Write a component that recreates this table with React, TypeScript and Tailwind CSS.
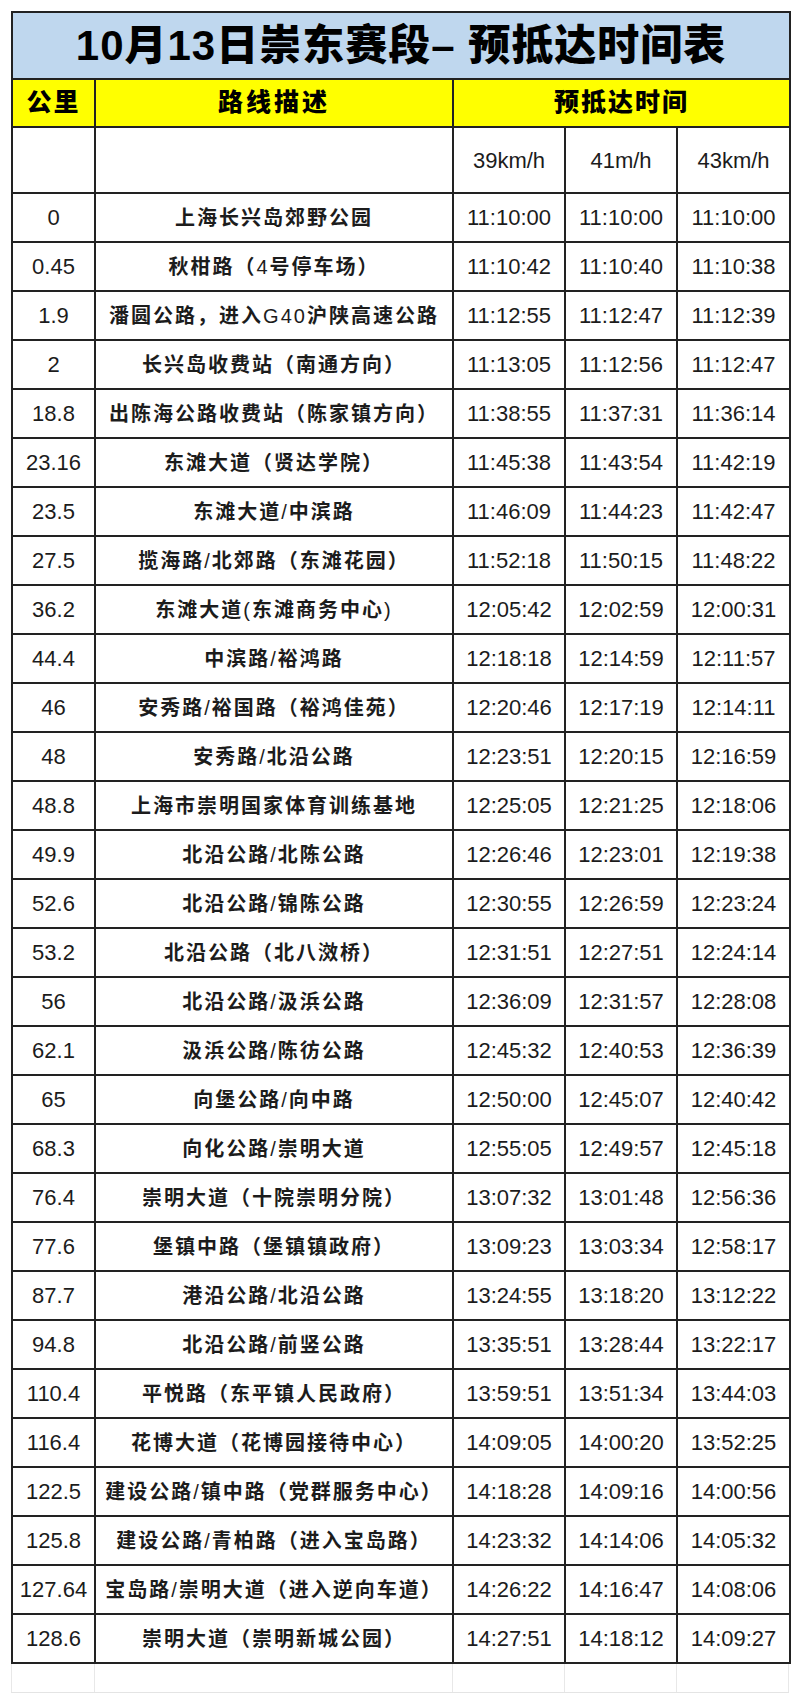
import React from "react";

type Row = [string, string, string, string, string];

const rows: Row[] = [
  ["0", "上海长兴岛郊野公园", "11:10:00", "11:10:00", "11:10:00"],
  ["0.45", "秋柑路（4号停车场）", "11:10:42", "11:10:40", "11:10:38"],
  ["1.9", "潘圆公路，进入G40沪陕高速公路", "11:12:55", "11:12:47", "11:12:39"],
  ["2", "长兴岛收费站（南通方向）", "11:13:05", "11:12:56", "11:12:47"],
  ["18.8", "出陈海公路收费站（陈家镇方向）", "11:38:55", "11:37:31", "11:36:14"],
  ["23.16", "东滩大道（贤达学院）", "11:45:38", "11:43:54", "11:42:19"],
  ["23.5", "东滩大道/中滨路", "11:46:09", "11:44:23", "11:42:47"],
  ["27.5", "揽海路/北郊路（东滩花园）", "11:52:18", "11:50:15", "11:48:22"],
  ["36.2", "东滩大道(东滩商务中心)", "12:05:42", "12:02:59", "12:00:31"],
  ["44.4", "中滨路/裕鸿路", "12:18:18", "12:14:59", "12:11:57"],
  ["46", "安秀路/裕国路（裕鸿佳苑）", "12:20:46", "12:17:19", "12:14:11"],
  ["48", "安秀路/北沿公路", "12:23:51", "12:20:15", "12:16:59"],
  ["48.8", "上海市崇明国家体育训练基地", "12:25:05", "12:21:25", "12:18:06"],
  ["49.9", "北沿公路/北陈公路", "12:26:46", "12:23:01", "12:19:38"],
  ["52.6", "北沿公路/锦陈公路", "12:30:55", "12:26:59", "12:23:24"],
  ["53.2", "北沿公路（北八滧桥）", "12:31:51", "12:27:51", "12:24:14"],
  ["56", "北沿公路/汲浜公路", "12:36:09", "12:31:57", "12:28:08"],
  ["62.1", "汲浜公路/陈彷公路", "12:45:32", "12:40:53", "12:36:39"],
  ["65", "向堡公路/向中路", "12:50:00", "12:45:07", "12:40:42"],
  ["68.3", "向化公路/崇明大道", "12:55:05", "12:49:57", "12:45:18"],
  ["76.4", "崇明大道（十院崇明分院）", "13:07:32", "13:01:48", "12:56:36"],
  ["77.6", "堡镇中路（堡镇镇政府）", "13:09:23", "13:03:34", "12:58:17"],
  ["87.7", "港沿公路/北沿公路", "13:24:55", "13:18:20", "13:12:22"],
  ["94.8", "北沿公路/前竖公路", "13:35:51", "13:28:44", "13:22:17"],
  ["110.4", "平悦路（东平镇人民政府）", "13:59:51", "13:51:34", "13:44:03"],
  ["116.4", "花博大道（花博园接待中心）", "14:09:05", "14:00:20", "13:52:25"],
  ["122.5", "建设公路/镇中路（党群服务中心）", "14:18:28", "14:09:16", "14:00:56"],
  ["125.8", "建设公路/青柏路（进入宝岛路）", "14:23:32", "14:14:06", "14:05:32"],
  ["127.64", "宝岛路/崇明大道（进入逆向车道）", "14:26:22", "14:16:47", "14:08:06"],
  ["128.6", "崇明大道（崇明新城公园）", "14:27:51", "14:18:12", "14:09:27"],
];

const cell = "border-2 border-[#222] text-center align-middle p-0";
const num = "text-[22px] text-[#1c1c1c]";

// latin runs inside the route text are set in a regular weight, as in the sheet
function Route({ text }: { text: string }) {
  const parts = text.split(/([A-Za-z0-9/()]+)/).filter(Boolean);
  return (
    <>
      {parts.map((p, i) =>
        /^[A-Za-z0-9/()]+$/.test(p) ? (
          <span key={i} className="font-normal">
            {p}
          </span>
        ) : (
          <span key={i}>{p}</span>
        )
      )}
    </>
  );
}

export default function App() {
  return (
    <div className="w-[800px] min-h-[1705px] bg-white pt-[11px] pl-[11px] font-['Liberation_Sans','Noto_Sans_CJK_SC',sans-serif]">
      <table className="w-[778px] table-fixed border-collapse">
        <colgroup>
          <col className="w-[83px]" />
          <col className="w-[358px]" />
          <col className="w-[112px]" />
          <col className="w-[112px]" />
          <col className="w-[113px]" />
        </colgroup>
        <tbody>
          <tr className="h-[67px] bg-[#bfd7ee]">
            <td colSpan={5} className={`${cell} text-[42px] font-black text-black tracking-[1px]`}>
              10月13日崇东赛段– 预抵达时间表
            </td>
          </tr>
          <tr className="h-[48px] bg-[#ffff00]">
            <td className={`${cell} text-[25px] font-black text-black tracking-[2px]`}>公里</td>
            <td className={`${cell} text-[25px] font-black text-black tracking-[3px]`}>路线描述</td>
            <td colSpan={3} className={`${cell} text-[25px] font-black text-black tracking-[2px]`}>
              预抵达时间
            </td>
          </tr>
          <tr className="h-[66px]">
            <td className={cell}></td>
            <td className={cell}></td>
            <td className={`${cell} ${num}`}>39km/h</td>
            <td className={`${cell} ${num}`}>41m/h</td>
            <td className={`${cell} ${num}`}>43km/h</td>
          </tr>
          {rows.map((r) => (
            <tr key={r[0]} className="h-[49px]">
              <td className={`${cell} ${num}`}>{r[0]}</td>
              <td className={`${cell} text-[20px] font-bold text-[#1c1c1c] tracking-[2px] whitespace-nowrap`}>
                <Route text={r[1]} />
              </td>
              <td className={`${cell} ${num}`}>{r[2]}</td>
              <td className={`${cell} ${num}`}>{r[3]}</td>
              <td className={`${cell} ${num}`}>{r[4]}</td>
            </tr>
          ))}
        </tbody>
      </table>
      {/* faint spare row under the table */}
      <div className="flex w-[778px] h-[29px] border-b border-[#e4e4e4]">
        <div className="w-[84px] border-l border-r border-[#e8e8e8]" />
        <div className="w-[358px] border-r border-[#e8e8e8]" />
        <div className="w-[112px] border-r border-[#e8e8e8]" />
        <div className="w-[112px] border-r border-[#e8e8e8]" />
        <div className="w-[112px] border-r border-[#e8e8e8]" />
      </div>
    </div>
  );
}
